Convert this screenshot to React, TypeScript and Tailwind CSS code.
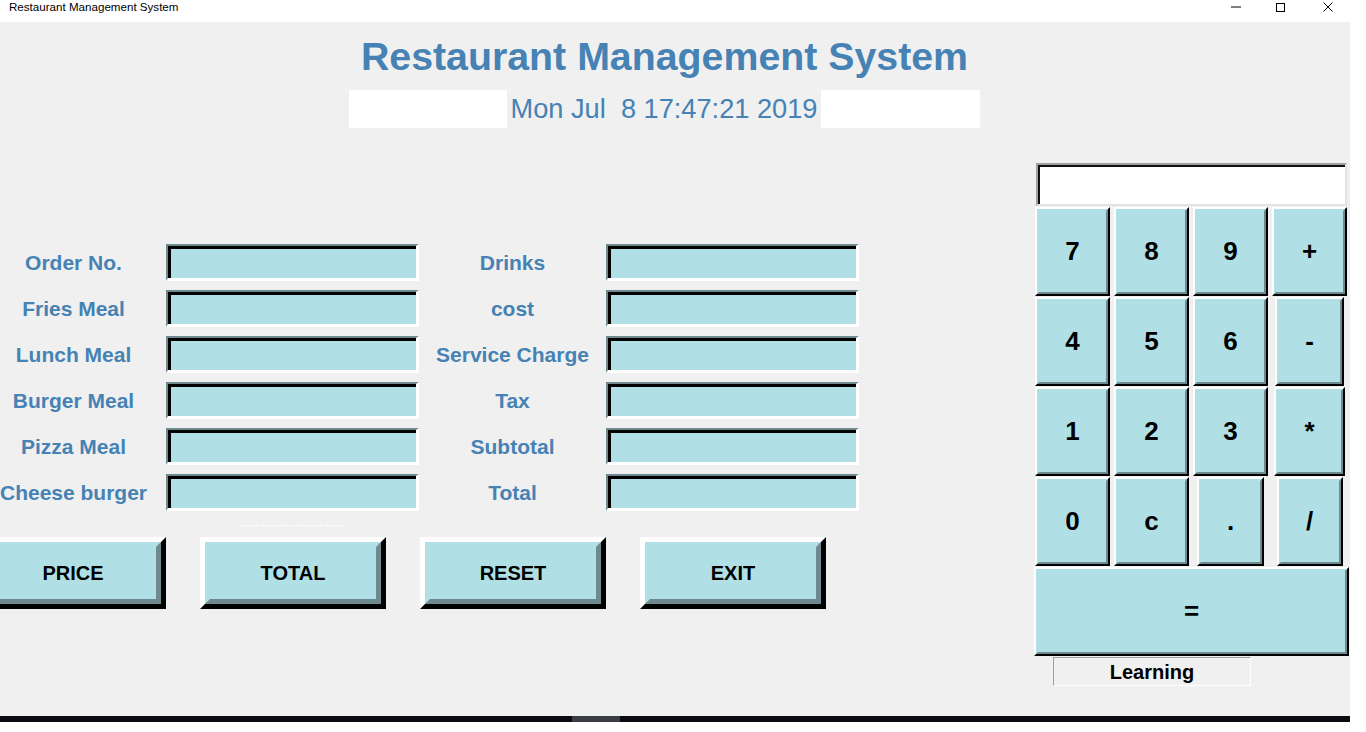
import React from "react";

const leftLabels = ["Order No.", "Fries Meal", "Lunch Meal", "Burger Meal", "Pizza Meal", "Cheese burger"];
const rightLabels = ["Drinks", "cost", "Service Charge", "Tax", "Subtotal", "Total"];
const actions = ["PRICE", "TOTAL", "RESET", "EXIT"];

// keys of the calculator, with a fixed width where the button is narrower than its cell
const keys: { label: string; width?: string }[] = [
  { label: "7" },
  { label: "8" },
  { label: "9" },
  { label: "+" },
  { label: "4" },
  { label: "5" },
  { label: "6" },
  { label: "-", width: "w-[69px]" },
  { label: "1" },
  { label: "2" },
  { label: "3" },
  { label: "*", width: "w-[71px]" },
  { label: "0" },
  { label: "c" },
  { label: ".", width: "w-[67px]" },
  { label: "/", width: "w-[66px]" },
];

const Entry = () => (
  <div className="h-[37px] w-[253px] border-t-2 border-l-2 border-b-[3px] border-r-[3px] border-t-[#6e8a8e] border-l-[#6e8a8e] border-b-white border-r-white">
    <div className="h-full w-full border-t-[3px] border-l-[3px] border-black bg-[#b0e0e6]" />
  </div>
);

const FieldLabel = ({ text }: { text: string }) => (
  <div className="flex h-[37px] items-center justify-center whitespace-nowrap text-[21px] font-bold text-[#4682b4]">
    {text}
  </div>
);

const ActionButton = ({ label }: { label: string }) => (
  <button className="h-[72px] w-[186px] shrink-0 border-[5px] border-t-white border-l-white border-b-black border-r-black p-0">
    <div className="flex h-full w-full items-center justify-center border-[5px] border-t-[#b0e0e6] border-l-[#b0e0e6] border-b-[#6e8a8e] border-r-[#6e8a8e] bg-[#b0e0e6] text-[20px] font-bold text-black">
      {label}
    </div>
  </button>
);

const CalcKey = ({ label, width }: { label: string; width?: string }) => (
  <button
    className={
      "h-[89px] justify-self-center border-2 border-t-white border-l-white border-b-black border-r-black p-0 " +
      (width ?? "w-[75px]")
    }
  >
    <div className="flex h-full w-full items-center justify-center border-2 border-t-[#b0e0e6] border-l-[#b0e0e6] border-b-[#6e8a8e] border-r-[#6e8a8e] bg-[#b0e0e6] text-[26px] font-bold text-black">
      {label}
    </div>
  </button>
);

export default function App() {
  return (
    <div className="flex h-[732px] w-[1366px] flex-col overflow-hidden bg-white font-['Liberation_Sans',Arial,sans-serif]">
      {/* window title bar */}
      <div className="flex h-[22px] shrink-0 items-start bg-white">
        <span className="pl-[9px] text-[11.6px] leading-[14px] text-black">
          Restaurant Management System
        </span>
        <div className="ml-auto mr-[33px] flex items-start pt-[2px]">
          <svg width="10" height="10" viewBox="0 0 10 10">
            <line x1="0" y1="5" x2="10" y2="5" stroke="#000" strokeWidth="1" />
          </svg>
          <svg width="10" height="10" viewBox="0 0 10 10" className="ml-[35px]">
            <rect x="0.5" y="1.5" width="8" height="8" fill="none" stroke="#000" strokeWidth="1" />
          </svg>
          <svg width="10" height="10" viewBox="0 0 10 10" className="ml-[37px]">
            <path d="M0.5 0.5 L9.5 9.5 M9.5 0.5 L0.5 9.5" stroke="#000" strokeWidth="1" />
          </svg>
        </div>
      </div>

      <div className="flex h-[694px] shrink-0">
        <main className="flex h-full w-[1350px] flex-col overflow-hidden bg-[#f0f0f0]">
          <header className="flex w-[1329px] flex-col items-center">
            <h1 className="mt-[11px] h-[46px] text-[39.3px] font-bold leading-[46px] text-[#4682b4]">
              Restaurant Management System
            </h1>
            <div className="mt-[11px] flex h-[38px]">
              <div className="w-[158px] bg-white" />
              <div className="w-[314px] text-center text-[27.2px] leading-[38px] text-[#4682b4] whitespace-pre">
                Mon Jul  8 17:47:21 2019
              </div>
              <div className="w-[159px] bg-white" />
            </div>
          </header>

          <div className="mt-[35px] flex">
            <section className="flex w-[1035px] flex-col pt-[81px]">
              <div className="grid grid-cols-[166px_253px_187px_253px] gap-y-[9px]">
                {leftLabels.map((label, i) => (
                  <React.Fragment key={label}>
                    <div className="pr-[19px]">
                      <FieldLabel text={label} />
                    </div>
                    <Entry />
                    <FieldLabel text={rightLabels[i]} />
                    <Entry />
                  </React.Fragment>
                ))}
              </div>
              <div className="ml-[241px] mt-[14px] mb-[11px] h-0 w-[102px] border-t border-dashed border-white" />
              <div className="ml-[-20px] flex gap-[34px]">
                {actions.map((a) => (
                  <ActionButton key={a} label={a} />
                ))}
              </div>
            </section>

            <section className="flex w-[315px] flex-col">
              <div className="ml-[1px] h-[43px] w-[311px] border-2 border-t-[#a0a0a0] border-l-[#a0a0a0] border-b-[#e3e3e3] border-r-[#e3e3e3]">
                <div className="h-full w-full border-t-2 border-l-2 border-[#111] bg-white" />
              </div>
              <div className="mt-[1px] grid w-[312px] grid-cols-[75px_75px_75px_75px] gap-x-[4px] gap-y-[1px]">
                {keys.map((k) => (
                  <CalcKey key={k.label} label={k.label} width={k.width} />
                ))}
                <button className="col-span-4 ml-[-1px] h-[89px] w-[315px] border-2 border-t-white border-l-white border-b-black border-r-black p-0">
                  <div className="flex h-full w-full items-center justify-center border-2 border-t-[#b0e0e6] border-l-[#b0e0e6] border-b-[#6e8a8e] border-r-[#6e8a8e] bg-[#b0e0e6] text-[26px] font-bold text-black">
                    =
                  </div>
                </button>
              </div>
              <div className="ml-[18px] mt-[1px] flex h-[29px] w-[198px] items-center justify-center border border-t-[#a0a0a0] border-l-[#a0a0a0] border-b-white border-r-white text-[20px] font-bold text-black">
                Learning
              </div>
            </section>
          </div>
        </main>
        <div className="flex-1 bg-white" />
      </div>

      {/* taskbar edge */}
      <div className="flex h-[6px] w-[1350px] shrink-0 bg-[#0a0c11]">
        <div className="ml-[572px] w-[48px] bg-[#3a3d44]" />
      </div>
    </div>
  );
}
